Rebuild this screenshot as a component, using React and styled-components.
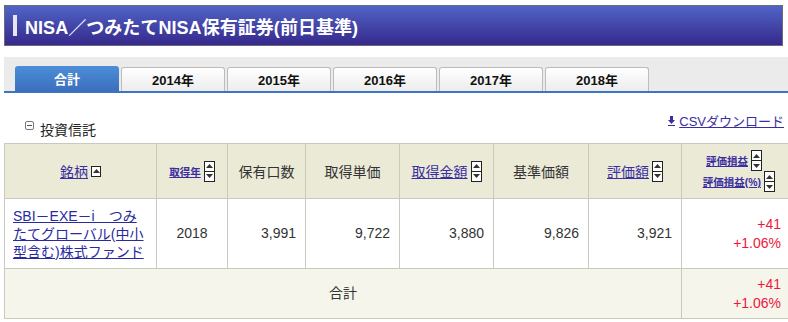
import React from "react";
import styled, { createGlobalStyle } from "styled-components";

const GlobalStyle = createGlobalStyle`
  body {
    margin: 0;
    background: #fff;
    font-family: "Liberation Sans", "Noto Sans CJK JP", sans-serif;
    color: #333;
  }
`;

const Page = styled.div`
  width: 788px;
  padding: 5px 0 0 4px;
  box-sizing: border-box;
`;

const TitleBar = styled.div`
  width: 779px;
  height: 41px;
  box-sizing: border-box;
  border: 1px solid #6a6a7a;
  background: linear-gradient(#5064c6, #36298c);
  display: flex;
  align-items: center;
  padding-left: 8px;
  gap: 8px;
`;

const TitleMark = styled.span`
  width: 4px;
  height: 21px;
  background: #e6e6f0;
`;

const TitleText = styled.h1`
  margin: 0;
  color: #fff;
  font-size: 18px;
  font-weight: bold;
  letter-spacing: 0.05px;
`;

const TabBand = styled.div`
  margin-top: 11px;
  height: 34px;
  background: #ebebeb;
  display: flex;
  align-items: flex-end;
  gap: 2px;
  padding-left: 11px;
  border-bottom: 2px solid #3d74c2;
`;

const Tab = styled.div`
  width: 104px;
  height: ${(p) => (p.active ? "25px" : "24px")};
  box-sizing: border-box;
  border: ${(p) => (p.active ? "none" : "1px solid #bcbcbc")};
  border-bottom: none;
  border-radius: 3px 3px 0 0;
  background: ${(p) =>
    p.active
      ? "linear-gradient(#4c8ed8, #3b6fbe)"
      : "linear-gradient(#ffffff, #ececec)"};
  color: ${(p) => (p.active ? "#fff" : "#111")};
  font-size: 13px;
  font-weight: bold;
  display: flex;
  align-items: center;
  justify-content: center;
`;

const SectionHead = styled.div`
  display: flex;
  justify-content: space-between;
  align-items: flex-end;
  height: 50px;
  width: 780px;
`;

const SectionTitle = styled.div`
  display: flex;
  align-items: flex-start;
  gap: 6px;
  padding-left: 21px;
  padding-bottom: 4px;
  font-size: 14px;
  color: #222;
`;

const Collapse = styled.span`
  width: 9px;
  height: 9px;
  margin-top: 2px;
  box-sizing: border-box;
  border: 1px solid #777;
  border-radius: 2px;
  display: flex;
  align-items: center;
  justify-content: center;
  &::after {
    content: "";
    width: 5px;
    height: 1px;
    background: #555;
  }
`;

const CsvLink = styled.a`
  display: flex;
  align-items: center;
  gap: 4px;
  align-self: flex-start;
  margin-top: 18px;
  font-size: 13px;
  color: #3a2ea0;
  text-decoration: underline;
`;

const Table = styled.table`
  width: 781px;
  border-collapse: collapse;
  table-layout: fixed;
  font-size: 14px;
`;

const Th = styled.th`
  background: #eaead7;
  border: 1px solid #c9c9bd;
  height: 54px;
  font-weight: normal;
  color: #333;
  padding: 0;
  width: ${(p) => p.w}px;
`;

const Td = styled.td`
  background: ${(p) => (p.total ? "#f5f5ec" : "#fff")};
  border: 1px solid #c9c9bd;
  height: ${(p) => (p.total ? "49px" : "69px")};
  padding: ${(p) =>
    p.align === "left" ? "0 8px" : p.red ? "0 11px 0 0" : "0 9px"};
  text-align: ${(p) => p.align || "right"};
  color: ${(p) => (p.red ? "#f0163a" : "#333")};
  line-height: 19px;
`;

const HeadInner = styled.span`
  display: inline-flex;
  align-items: center;
  gap: 3px;
  margin-right: ${(p) => p.shift || 0}px;
`;

const SortLink = styled.a`
  color: #3a2ea0;
  text-decoration: underline;
  font-size: ${(p) => (p.small ? "10.5px" : "14px")};
  font-weight: ${(p) => (p.small ? "bold" : "normal")};
`;

const FundLink = styled.a`
  color: #2a2aa0;
  text-decoration: underline;
  display: block;
  line-height: 18px;
`;

const StackHead = styled.div`
  display: flex;
  flex-direction: column;
  align-items: flex-end;
  padding-right: 17px;
`;

const SortBox = styled.span`
  width: 11px;
  height: 21px;
  box-sizing: border-box;
  border: 1px solid #222;
  background: #fff;
  display: flex;
  flex-direction: column;
  flex-shrink: 0;
`;

const SortHalf = styled.span`
  flex: 1;
  display: flex;
  align-items: center;
  justify-content: center;
  & + & {
    border-top: 1px solid #222;
  }
`;

const UpBox = styled.span`
  width: 10px;
  height: 11px;
  box-sizing: border-box;
  border: 1px solid #222;
  background: #fff;
  display: flex;
  align-items: center;
  justify-content: center;
`;

const Tri = ({ down }) => (
  <svg width="7" height="4" viewBox="0 0 7 4">
    <path d={down ? "M0 0H7L3.5 4Z" : "M0 4H7L3.5 0Z"} fill="#333" />
  </svg>
);

const Sorter = () => (
  <SortBox>
    <SortHalf>
      <Tri />
    </SortHalf>
    <SortHalf>
      <Tri down />
    </SortHalf>
  </SortBox>
);

const tabs = ["合計", "2014年", "2015年", "2016年", "2017年", "2018年"];

export default function App() {
  return (
    <>
      <GlobalStyle />
      <Page>
        <TitleBar>
          <TitleMark />
          <TitleText>NISA／つみたてNISA保有証券(前日基準)</TitleText>
        </TitleBar>

        <TabBand>
          {tabs.map((t, i) => (
            <Tab key={t} active={i === 0}>
              {t}
            </Tab>
          ))}
        </TabBand>

        <SectionHead>
          <SectionTitle>
            <Collapse />
            投資信託
          </SectionTitle>
          <CsvLink>
            <svg width="7" height="10" viewBox="0 0 7 10">
              <path d="M2 0H5V4H7L3.5 8L0 4H2Z" fill="#3a2ea0" />
              <rect x="0" y="9" width="7" height="1" fill="#3a2ea0" />
            </svg>
            CSVダウンロード
          </CsvLink>
        </SectionHead>

        <Table>
          <thead>
            <tr>
              <Th w={151}>
                <HeadInner>
                  <SortLink>銘柄</SortLink>
                  <UpBox>
                    <Tri />
                  </UpBox>
                </HeadInner>
              </Th>
              <Th w={70}>
                <HeadInner>
                  <SortLink small>取得年</SortLink>
                  <Sorter />
                </HeadInner>
              </Th>
              <Th w={77}>保有口数</Th>
              <Th w={93}>取得単価</Th>
              <Th w={93}>
                <HeadInner>
                  <SortLink>取得金額</SortLink>
                  <Sorter />
                </HeadInner>
              </Th>
              <Th w={94}>基準価額</Th>
              <Th w={92}>
                <HeadInner>
                  <SortLink>評価額</SortLink>
                  <Sorter />
                </HeadInner>
              </Th>
              <Th w={110}>
                <StackHead>
                  <HeadInner shift={13}>
                    <SortLink small>評価損益</SortLink>
                    <Sorter />
                  </HeadInner>
                  <HeadInner>
                    <SortLink small>評価損益(%)</SortLink>
                    <Sorter />
                  </HeadInner>
                </StackHead>
              </Th>
            </tr>
          </thead>
          <tbody>
            <tr>
              <Td align="left">
                <FundLink>SBI－EXE－i　つみたてグローバル(中小型含む)株式ファンド</FundLink>
              </Td>
              <Td align="center">2018</Td>
              <Td>3,991</Td>
              <Td>9,722</Td>
              <Td>3,880</Td>
              <Td>9,826</Td>
              <Td>3,921</Td>
              <Td red>
                +41
                <br />
                +1.06%
              </Td>
            </tr>
            <tr>
              <Td total align="center" colSpan={7}>
                合計
              </Td>
              <Td total red>
                +41
                <br />
                +1.06%
              </Td>
            </tr>
          </tbody>
        </Table>
      </Page>
    </>
  );
}
